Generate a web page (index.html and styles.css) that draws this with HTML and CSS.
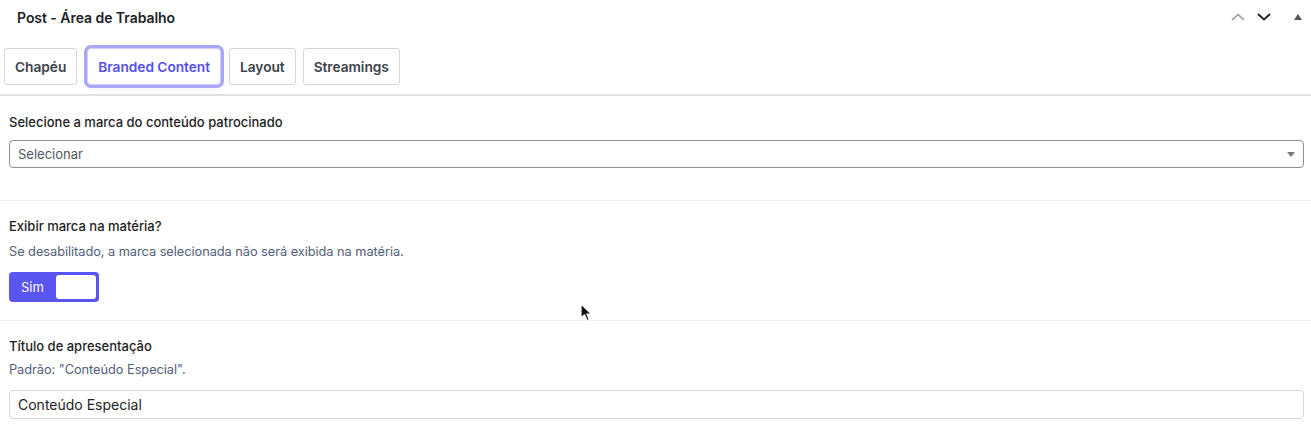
FILE: index.html
```html
<!DOCTYPE html>
<html lang="pt-BR">
<head>
<meta charset="utf-8">
<title>Post - Área de Trabalho</title>
<link rel="stylesheet" href="styles.css">
</head>
<body>
<div class="panel">
  <div class="panel-header">
    <h2 class="panel-title">Post - Área de Trabalho</h2>
    <div class="panel-actions">
      <button class="icon-btn muted" aria-label="Mover para cima">
        <svg width="14" height="8" viewBox="0 0 14 8"><path d="M1 7 L7 1.5 L13 7" fill="none" stroke="currentColor" stroke-width="1.8"/></svg>
      </button>
      <button class="icon-btn" aria-label="Mover para baixo">
        <svg width="14" height="8" viewBox="0 0 14 8"><path d="M1 1 L7 6.5 L13 1" fill="none" stroke="currentColor" stroke-width="2"/></svg>
      </button>
      <button class="icon-btn tri" aria-label="Recolher">
        <svg width="8" height="6" viewBox="0 0 8 6"><path d="M0 6 L4 0 L8 6 Z" fill="currentColor"/></svg>
      </button>
    </div>
  </div>

  <div class="tabs">
    <button class="tab">Chapéu</button>
    <button class="tab active">Branded Content</button>
    <button class="tab">Layout</button>
    <button class="tab">Streamings</button>
  </div>

  <div class="section s1">
    <label class="field-label">Selecione a marca do conteúdo patrocinado</label>
    <div class="select">
      <span>Selecionar</span>
      <svg width="8" height="5" viewBox="0 0 8 5"><path d="M0 0 L8 0 L4 5 Z" fill="currentColor"/></svg>
    </div>
  </div>

  <div class="section s2">
    <label class="field-label">Exibir marca na matéria?</label>
    <p class="help">Se desabilitado, a marca selecionada não será exibida na matéria.</p>
    <div class="toggle">
      <span class="toggle-text">Sim</span>
      <span class="toggle-knob"></span>
    </div>
  </div>

  <div class="section s3">
    <label class="field-label">Título de apresentação</label>
    <p class="help">Padrão: "Conteúdo Especial".</p>
    <div class="text-input">Conteúdo Especial</div>
  </div>

  <svg class="cursor" width="14" height="20" viewBox="0 0 14 20"><path d="M1 1 L1 15 L4.5 11.8 L7 17.5 L9.3 16.5 L6.9 11 L11.5 11 Z" fill="#111" stroke="#fff" stroke-width="1.2" stroke-linejoin="round"/></svg>
</div>
</body>
</html>
```

FILE: styles.css
```css
* { box-sizing: border-box; }
html, body { margin: 0; padding: 0; background: #fff; }
body {
  font-family: Inter, "Noto Sans", "Liberation Sans", sans-serif;
  color: #1e1e1e;
  width: 1311px;
  height: 434px;
  overflow: hidden;
}
.panel { position: relative; }
.panel-header {
  display: flex;
  align-items: center;
  justify-content: space-between;
  height: 34px;
  padding: 0 9px 0 17px;
}
.panel-title {
  margin: 0;
  font-size: 14px;
  font-weight: 600;
  color: #1d2327;
  letter-spacing: -0.05px;
}
.panel-actions { display: flex; align-items: center; gap: 12px; }
.icon-btn {
  border: 0;
  background: none;
  padding: 0;
  width: 14px;
  height: 14px;
  display: flex;
  align-items: center;
  justify-content: center;
  color: #1d2327;
}
.icon-btn.muted { color: #a7aaad; }
.icon-btn.tri { color: #50575e; margin-left: 11px; width: 8px; }

.tabs {
  display: flex;
  gap: 7px;
  margin-top: 14px;
  padding: 0 0 9px 4px;
  border-bottom: 2px solid #e2e2e5;
}
.tab {
  height: 37px;
  padding: 0 10px;
  border: 1px solid #d6d6da;
  border-radius: 3px;
  background: #fff;
  font-family: inherit;
  font-size: 13.75px;
  font-weight: 600;
  color: #3c434a;
  letter-spacing: -0.05px;
}
.tab.active {
  color: #5650ee;
  margin: 0 1px 0 3px;
  border-color: #cfcff5;
  box-shadow: 0 0 0 3px #a9a6f6, 0 4px 5px rgba(0,0,0,0.06);
  border-radius: 4px;
}

.section {
  display: flex;
  flex-direction: column;
  padding: 15px 7px 18px 9px;
  border-bottom: 1px solid #f0f0f1;
}
.s1 { padding-top: 16px; padding-bottom: 32px; }
.s3 { border-bottom: 0; }

.field-label {
  font-size: 13px;
  font-weight: 500;
  line-height: 20px;
  color: #1e1e1e;
}
.help {
  margin: 0;
  font-size: 12.8px;
  line-height: 20px;
  color: #526079;
  letter-spacing: -0.05px;
}
.s1 .field-label { margin-bottom: 8px; }
.s2 .help { margin-top: 6px; }
.s3 .help { margin-top: 4px; }

.select {
  height: 28px;
  border: 1px solid #8c8f94;
  border-radius: 4px;
  display: flex;
  align-items: center;
  justify-content: space-between;
  padding: 0 8px 0 8px;
  font-size: 13px;
  color: #50575e;
}
.select svg { color: #787c82; }

.toggle {
  margin-top: 10px;
  width: 90px;
  height: 30px;
  background: #5a55f0;
  border-radius: 4px;
  display: flex;
  align-items: center;
  justify-content: space-between;
  padding: 3px 3px 3px 12px;
}
.toggle-text { color: #fff; font-size: 13px; }
.toggle-knob {
  width: 40px;
  height: 24px;
  background: #fff;
  border-radius: 3px;
}

.text-input {
  margin-top: 10px;
  height: 29px;
  border: 1px solid #d5d6da;
  border-radius: 4px;
  display: flex;
  align-items: center;
  padding: 0 8px;
  font-size: 14px;
  color: #1e1e1e;
}

.cursor {
  position: absolute;
  left: 580px;
  top: 303px;
}
```
